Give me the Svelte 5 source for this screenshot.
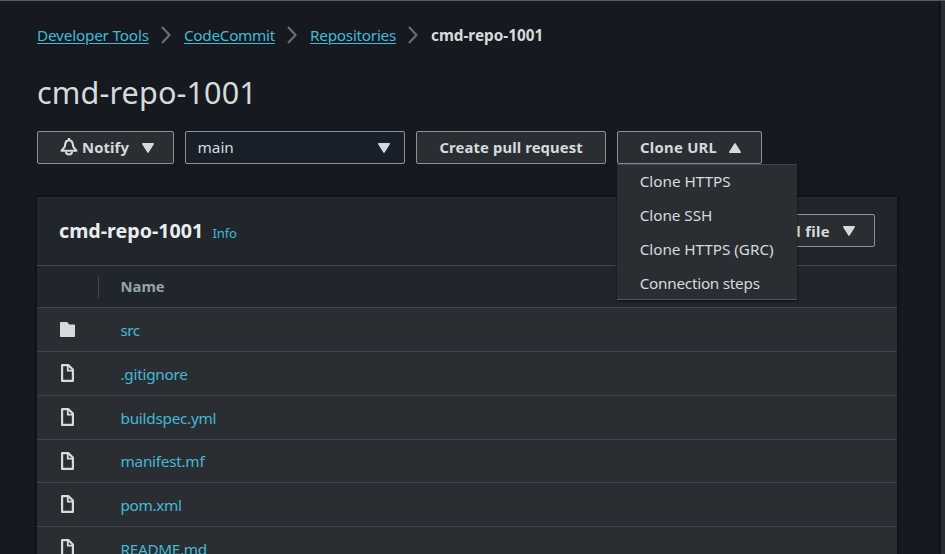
<script>
  const crumbs = [
    { label: 'Developer Tools', width: 112, spacing: -0.19 },
    { label: 'CodeCommit', width: 91, spacing: -0.3 },
    { label: 'Repositories', width: 86, spacing: -0.25 }
  ];
  const menu = [
    { label: 'Clone HTTPS', spacing: -0.02 },
    { label: 'Clone SSH', spacing: -0.05 },
    { label: 'Clone HTTPS (GRC)', spacing: -0.05 },
    { label: 'Connection steps', spacing: -0.26 }
  ];
  const files = [
    { name: 'src', folder: true, height: 44, spacing: -0.5 },
    { name: '.gitignore', height: 44, spacing: -0.25 },
    { name: 'buildspec.yml', height: 44, spacing: -0.25 },
    { name: 'manifest.mf', height: 43, spacing: -0.25 },
    { name: 'pom.xml', height: 44, spacing: -0.33 },
    { name: 'README.md', height: 44, spacing: -0.3 }
  ];
</script>

{#snippet caret(up = false)}
  <svg class="caret" class:up width="12" height="10" viewBox="0 0 12 10"><path d="M.8.8h10.4L6 9.2z" fill="currentColor" stroke="currentColor" stroke-width="1.5" stroke-linejoin="round" /></svg>
{/snippet}

<div class="page">
  <main>
    <nav>
      {#each crumbs as crumb}
        <a href="#top" style:width="{crumb.width}px" style:letter-spacing="{crumb.spacing}px">{crumb.label}</a>
        <svg class="chevron" width="10" height="18" viewBox="0 0 10 18"><path d="M1 1l7.5 8L1 17" fill="none" stroke="#687078" stroke-width="2.1" /></svg>
      {/each}
      <b>cmd-repo-1001</b>
    </nav>
    <h1>cmd-repo-1001</h1>
    <div class="toolbar">
      <button class="notify">
        <svg class="bell" width="18" height="18" viewBox="0 0 18 18" fill="none" stroke="currentColor" stroke-width="2.1"><path d="M9 0v2.5M1.5 12.8h15L13.2 8.7l-.5-3C12.3 3.4 10.9 2.2 9 2.2S5.7 3.4 5.3 5.7l-.5 3z" stroke-linejoin="round" /><path d="M6 13.5a3 3 0 0 0 6 0" /></svg>
        <span>Notify</span>{@render caret()}
      </button>
      <button class="branch"><span>main</span>{@render caret()}</button>
      <button class="pull"><span>Create pull request</span></button>
      <div class="clone-wrap">
        <button class="clone"><span>Clone URL</span>{@render caret(true)}</button>
        <div class="menu">
          {#each menu as item}<div style:letter-spacing="{item.spacing}px">{item.label}</div>{/each}
        </div>
      </div>
    </div>
    <section>
      <header>
        <h2>cmd-repo-1001</h2><a class="info" href="#info">Info</a>
        <button class="add"><span>Add file</span>{@render caret()}</button>
      </header>
      <div class="columns"><i></i><strong>Name</strong></div>
      {#each files as file}
        <div class="row" style:height="{file.height}px">
          <div class="icon">
            {#if file.folder}
              <svg class="folder" width="15" height="15" viewBox="0 0 15 15"><path d="M.5.5h6.7l2 2.5h5.3v11.5H.5z" fill="#d5dbdb" stroke="#d5dbdb" stroke-linejoin="round" /></svg>
            {:else}
              <svg width="13" height="18" viewBox="0 0 13 18" fill="none" stroke="#d5dbdb" stroke-width="2.2"><path d="M1.1 1.1h6.2L11.9 5.5v11.4H1.1z" stroke-linejoin="round" /><path d="M6.8 1v5.6H12" stroke-width="1.8" /></svg>
            {/if}
          </div>
          <a href="#file" style:letter-spacing="{file.spacing}px">{file.name}</a>
        </div>
      {/each}
    </section>
  </main>
  <aside></aside>
</div>

<style>
  :global(body) { background: #16191f; overflow: hidden; }
  .page { box-sizing: border-box; width: 945px; height: 554px; overflow: hidden; display: flex; justify-content: space-between; background: #16191f; border-top: 1px solid #545b64; color: #d5dbdb; font: 15.3px/24px "Noto Sans", sans-serif; }
  main { width: 860px; margin-left: 37px; }
  aside { width: 4px; background: #2a2e33; box-shadow: -1px 0 2px #0d1014; }
  a { color: #44b9d6; text-decoration: none; white-space: nowrap; }
  nav { display: flex; height: 24px; margin-top: 22px; align-items: center; white-space: nowrap; }
  nav a { text-decoration: underline; text-underline-offset: 2px; text-decoration-thickness: 1px; }
  .chevron { margin: 0 13px 0 12px; }
  h1 { margin: 23px 0 0; height: 44px; font-size: 30.6px; line-height: 44px; font-weight: 400; letter-spacing: .12px; }
  .toolbar { display: flex; margin-top: 17px; height: 33px; gap: 11px; }
  button { box-sizing: border-box; height: 33px; display: flex; align-items: center; border: 1px solid #879596; border-radius: 2px; background: #2a2e33; color: #d5dbdb; font: 700 14.8px/24px "Noto Sans", sans-serif; letter-spacing: .12px; padding: 0; white-space: nowrap; }
  button span { margin-bottom: 2px; }
  .caret { display: block; }
  .up { transform: rotate(180deg); }
  .notify { width: 137px; padding-left: 22px; }
  .bell { margin-bottom: 1px; }
  .notify span { width: 48px; margin: 0 12px 2px 3.5px; }
  .branch { width: 220px; justify-content: space-between; padding: 0 14px 0 11.5px; background: #1a2029; font-weight: 400; font-size: 15.3px; letter-spacing: 0; }
  .pull { width: 190px; padding-left: 22.5px; }
  .clone-wrap { position: relative; }
  .clone { width: 145px; padding-left: 22px; }
  .clone span { width: 77px; margin-right: 12px; letter-spacing: .28px; }
  .menu { position: absolute; z-index: 2; box-sizing: border-box; top: 33px; left: 0; width: 180px; height: 136px; border-top: 1px solid #414750; border-bottom: 1px solid #545b64; background: #2a2e33; box-shadow: 0 1px 2px #0b0e12; }
  .menu div { height: 34px; line-height: 32px; padding-left: 22.7px; white-space: nowrap; }
  section { margin-top: 33px; background: #2a2e33; box-shadow: 0 0 3px #080a0d; }
  header { box-sizing: border-box; height: 69px; display: flex; align-items: center; padding: 0 22px 2px; background: #21252c; border-top: 1px solid #2a2e33; border-bottom: 1px solid #414750; }
  h2 { margin: 0; width: 144px; font-size: 19.7px; line-height: 30px; white-space: nowrap; color: #eaeded; }
  .info { font-size: 13.1px; margin: 5px 0 0 9.5px; letter-spacing: -.2px; }
  .add { width: 125px; margin-left: auto; padding-left: 20px; }
  .add span { width: 59px; margin: 0 13px 0 0; letter-spacing: .35px; }
  .columns { box-sizing: border-box; height: 42px; display: flex; align-items: center; background: #21252c; border-bottom: 1px solid #414750; color: #95a5a6; }
  .columns i { width: 61px; height: 22px; border-right: 1px solid #414750; }
  .columns strong { margin: 0 0 1px 21.5px; font-size: 14.8px; }
  .row { box-sizing: border-box; display: flex; align-items: center; border-bottom: 1px solid #414750; }
  .icon { display: flex; justify-content: center; width: 61px; margin-right: 22.5px; padding-bottom: 1px; }
  .folder { margin-top: 1px; }
</style>
